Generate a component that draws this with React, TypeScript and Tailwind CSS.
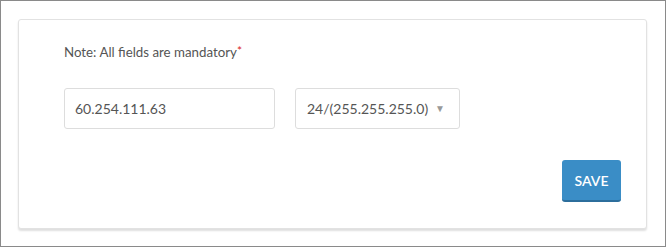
import React from "react";

const App: React.FC = () => {
  return (
    <div className="w-[667px] h-[248px] bg-white">
      <div className="w-[666px] h-[247px] border border-[#8a8a8a] bg-white pl-[17px] pt-[18px] font-['Lato',sans-serif]">
        {/* Card */}
        <div className="w-[629px] h-[210px] bg-white border border-[#e2e2e2] rounded-[3px] shadow-[0_2px_2px_rgba(0,0,0,0.13)] flex flex-col pl-[45px] pr-[25px] pt-[23px]">
          <p className="text-[13.3px] leading-[18px] text-[#555]">
            Note: All fields are mandatory
            <span className="text-[#d9261c] text-[12px] leading-none align-[2px]">*</span>
          </p>

          <div className="flex gap-[20px] mt-[27px]">
            <input
              type="text"
              defaultValue="60.254.111.63"
              className="w-[211px] h-[41px] border border-[#dddddd] rounded-[3px] px-[10px] text-[14px] text-[#555] outline-none font-['Lato',sans-serif]"
            />
            <div className="w-[165px] h-[41px] border border-[#dddddd] rounded-[3px] pl-[11px] pr-[14px] flex items-center justify-between text-[14px] text-[#555]">
              <span>24/(255.255.255.0)</span>
              <span className="text-[10px] text-[#999]">▼</span>
            </div>
          </div>

          <div className="flex justify-end mt-[31px]">
            <button className="w-[59px] h-[42px] bg-[#3a8dc6] border-b-2 border-[#2c6e9c] rounded-[3px] text-white text-[14px] font-semibold">
              SAVE
            </button>
          </div>
        </div>
      </div>
    </div>
  );
};

export default App;
